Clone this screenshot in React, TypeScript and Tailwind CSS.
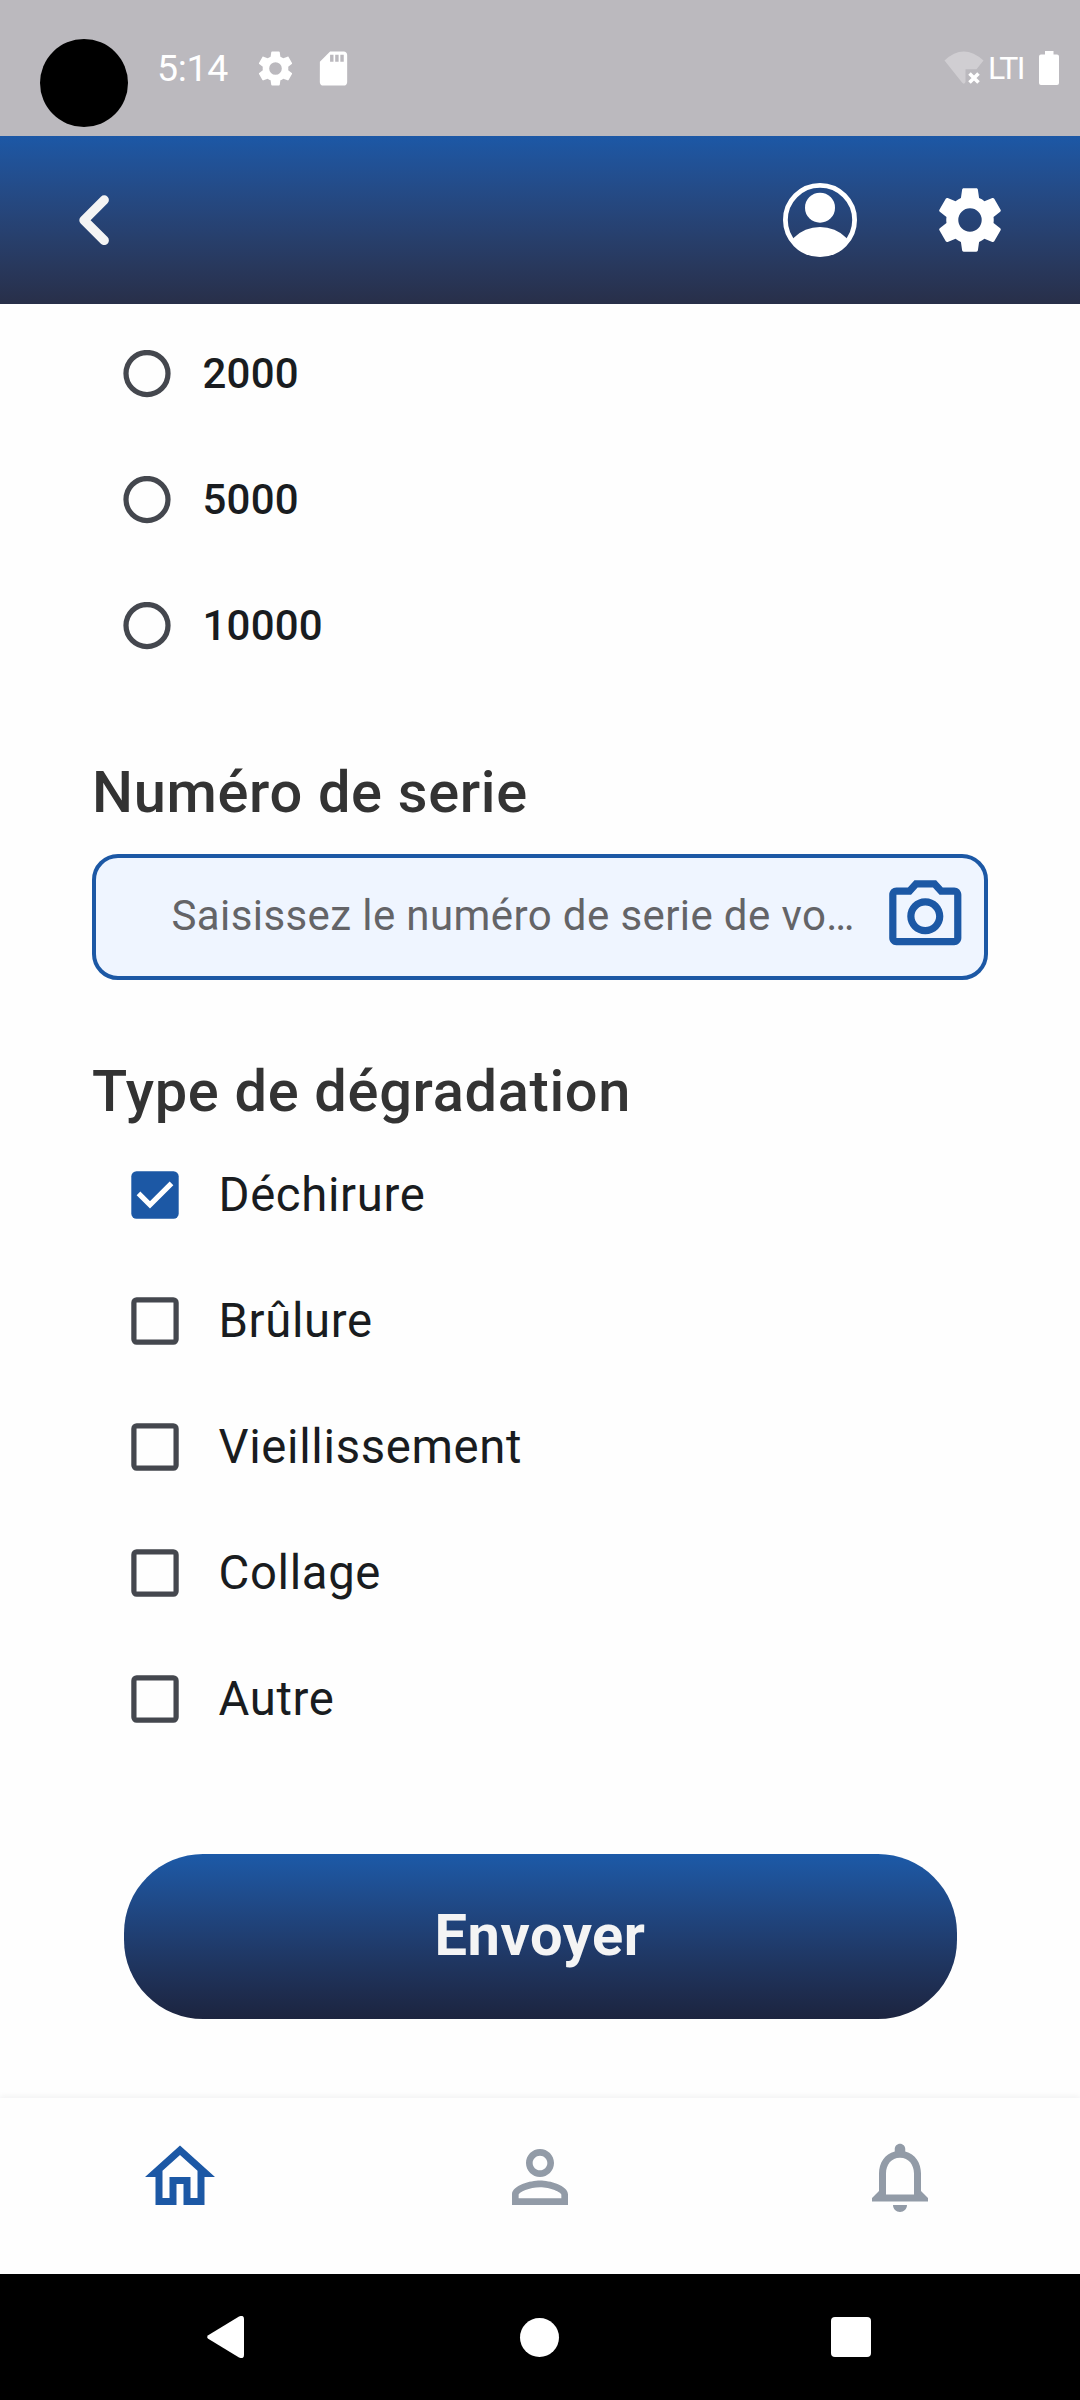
import React from "react";

const GEAR =
  "M19.43 12.98c.04-.32.07-.64.07-.98s-.03-.66-.07-.98l2.11-1.65c.19-.15.24-.42.12-.64l-2-3.46c-.12-.22-.39-.3-.61-.22l-2.49 1c-.52-.4-1.08-.73-1.69-.98l-.38-2.65C14.46 2.18 14.25 2 14 2h-4c-.25 0-.46.18-.49.42l-.38 2.65c-.61.25-1.17.59-1.69.98l-2.49-1c-.23-.09-.49 0-.61.22l-2 3.46c-.13.22-.07.49.12.64l2.11 1.65c-.04.32-.07.65-.07.98s.03.66.07.98l-2.11 1.65c-.19.15-.24.42-.12.64l2 3.46c.12.22.39.3.61.22l2.49-1c.52.4 1.08.73 1.69.98l.38 2.65c.03.24.24.42.49.42h4c.25 0 .46-.18.49-.42l.38-2.65c.61-.25 1.17-.59 1.69-.98l2.49 1c.23.09.49 0 .61-.22l2-3.46c.12-.22.07-.49-.12-.64l-2.11-1.65zM12 15.700a3.700 3.700 0 1 1 0-7.400 3.700 3.700 0 0 1 0 7.400z";
const SD_CARD =
  "M18 2h-8L4.02 8 4 20c0 1.1.9 2 2 2h12c1.1 0 2-.9 2-2V4c0-1.1-.9-2-2-2zm-6 6h-2V4h2v4zm3 0h-2V4h2v4zm3 0h-2V4h2v4z";
const CAMERA =
  "M14.12 4l1.83 2H20v12H4V6h4.05l1.83-2h4.24M15 2H9L7.17 4H4c-1.1 0-2 .9-2 2v12c0 1.1.9 2 2 2h16c1.1 0 2-.9 2-2V6c0-1.1-.9-2-2-2h-3.17L15 2zm-3 7c1.65 0 3 1.35 3 3s-1.35 3-3 3-3-1.35-3-3 1.35-3 3-3m0-2c-2.76 0-5 2.24-5 5s2.24 5 5 5 5-2.24 5-5-2.24-5-5-5z";
const HOME =
  "M12 5.69l5 4.5V18h-2v-6H9v6H7v-7.81l5-4.5M12 3L2 12h3v8h6v-6h2v6h6v-8h3L12 3z";
const PERSON =
  "M12 5.9c1.16 0 2.1.94 2.1 2.1s-.94 2.1-2.1 2.1S9.9 9.16 9.9 8s.94-2.1 2.1-2.1m0 9c2.97 0 6.1 1.46 6.1 2.1v1.1H5.9V17c0-.64 3.13-2.1 6.1-2.1M12 4C9.79 4 8 5.79 8 8s1.79 4 4 4 4-1.79 4-4-1.79-4-4-4zm0 9c-2.67 0-8 1.34-8 4v3h16v-3c0-2.66-5.33-4-8-4z";
const BELL =
  "M12 22c1.1 0 2-.9 2-2h-4c0 1.1.89 2 2 2zm6-6v-5c0-3.07-1.64-5.64-4.5-6.32V4c0-.83-.67-1.5-1.5-1.5s-1.5.67-1.5 1.5v.68C7.63 5.36 6 7.92 6 11v5l-2 2v1h16v-1l-2-2zm-2 1H8v-6c0-2.48 1.51-4.5 4-4.5s4 2.02 4 4.5v6z";

function Icon({ d, className }: { d: string; className: string }) {
  return (
    <svg viewBox="0 0 24 24" fill="currentColor" className={`shrink-0 ${className}`}>
      <path d={d} />
    </svg>
  );
}

function StatusBar() {
  return (
    <div className="flex h-[136px] shrink-0 items-start bg-[#bbb9be] pr-[21px] pl-10 text-white">
      <div className="mt-[39px] size-[88px] rounded-full bg-black" />
      <div className="flex h-[136px] flex-1 items-center">
        <span className="ml-[29px] w-[80px] pt-[2px] text-[37.500px] leading-none tracking-[-0.300px]">5:14</span>
        <Icon d={GEAR} className="ml-[18px] size-[41px]" />
        <Icon d={SD_CARD} className="ml-[17px] size-[41px]" />
        <svg viewBox="0 0 40 34" className="ml-auto h-[34px] w-[40px] shrink-0">
          <path
            d="M0.5 9.5Q19.5 -8.500 39.500 9.500L32.500 18.300H21.500V31Q20 34 18 31.500Z"
            fill="#d0ced2"
          />
          <path d="M25.500 22.500L34.500 31.500M34.500 22.500L25.500 31.500" stroke="#fff" strokeWidth="3.600" />
        </svg>
        <span className="ml-[4px] w-[37px] text-[32px] leading-none tracking-[-1.600px]">LTI</span>
        <svg viewBox="0 0 20 34" className="ml-[14px] h-[34px] w-[20px] shrink-0" fill="#fff">
          <path d="M6 0H14.500V3.500H18Q20 3.500 20 5.500V32Q20 34 18 34H2Q0 34 0 32V5.500Q0 3.500 2 3.500H6Z" />
        </svg>
      </div>
    </div>
  );
}

function Header() {
  return (
    <header className="flex h-[168px] shrink-0 items-center bg-linear-to-b from-[#1c58a6] to-[#282f49] pr-[72px] pl-[79px] text-white">
      <svg viewBox="0 0 30 50" className="h-[50px] w-[30px]" fill="none">
        <path
          d="M25.200 5L5 25.200L25.200 45.400"
          stroke="#f4f4f4"
          strokeWidth="9.400"
          strokeLinecap="round"
          strokeLinejoin="round"
        />
      </svg>
      <svg viewBox="0 0 74 74" className="ml-auto size-[74px]">
        <circle cx="37" cy="37" r="34.600" fill="none" stroke="#fff" strokeWidth="4.800" />
        <circle cx="37" cy="24.700" r="15" fill="#fff" />
        <path d="M10.500 55A37.400 37.400 0 0 1 63.500 55L66 58.800A36.400 36.400 0 0 1 8 58.800Z" fill="#fff" />
      </svg>
      <Icon d={GEAR} className="mb-[1px] ml-[75px] size-[76px]" />
    </header>
  );
}

function Radio({ label }: { label: string }) {
  return (
    <div className="flex h-[126px] items-center pl-[31px]">
      <svg viewBox="0 0 48 48" className="size-[48px]" fill="none">
        <circle cx="24" cy="23.500" r="21" stroke="#44474e" strokeWidth="5.250" />
      </svg>
      <span className="ml-[31.500px] text-[42px] leading-none font-medium tracking-[0.200px] text-[#191c20]">{label}</span>
    </div>
  );
}

function Checkbox({ label, checked }: { label: string; checked: boolean }) {
  return (
    <div className="flex h-[126px] items-center pl-[39px]">
      <svg viewBox="0 0 48 48" className="size-[48px]" fill="none">
        {checked ? (
          <>
            <rect x="0.300" y="0.300" width="47.400" height="47.400" rx="5.200" fill="#1c58a5" />
            <path d="M7.500 22.300L19 33.800L40.500 12.300" stroke="#fff" strokeWidth="5.200" />
          </>
        ) : (
          <rect x="2.900" y="2.900" width="42.200" height="42.200" rx="2.800" stroke="#44474e" strokeWidth="5.250" />
        )}
      </svg>
      <span className="ml-[39.500px] pt-[2px] text-[47.250px] leading-none tracking-[0.650px] text-[#191c20]">{label}</span>
    </div>
  );
}

function Heading({ children, className }: { children: React.ReactNode; className: string }) {
  return (
    <h2
      className={`flex items-center text-[57.750px] leading-none font-medium tracking-[0.680px] whitespace-nowrap text-[#333333] ${className}`}
    >
      {children}
    </h2>
  );
}

const AMOUNTS = ["2000", "5000", "10000"];
const DAMAGES = ["Déchirure", "Brûlure", "Vieillissement", "Collage", "Autre"];

export default function App() {
  return (
    <div className="flex h-[2400px] w-[1080px] flex-col overflow-hidden bg-[#fefefe] font-['Roboto',sans-serif]">
      <StatusBar />
      <Header />
      <main className="flex-1 px-[92px] pt-[6.500px]">
        {AMOUNTS.map((a) => (
          <Radio key={a} label={a} />
        ))}
        <Heading className="mt-[42px] h-[123px] pt-[2px]">Numéro de serie</Heading>
        <div className="flex h-[126px] items-center rounded-[26px] border-4 border-[#1c58a5] bg-[#eff5ff] pr-[15.500px] pl-[75.500px]">
          <span className="pb-[2px] text-[42px] leading-none tracking-[0.400px] whitespace-nowrap text-[#646467]">
            Saisissez le numéro de serie de vo…
          </span>
          <Icon d={CAMERA} className="ml-auto size-[86.600px] text-[#1c58a5]" />
        </div>
        <Heading className="mt-[71.500px] h-[81px]">Type de dégradation</Heading>
        {DAMAGES.map((d, i) => (
          <Checkbox key={d} label={d} checked={i === 0} />
        ))}
        <button className="mt-[91.500px] ml-[31.500px] flex h-[165.500px] w-[833px] items-center justify-center rounded-[79px] bg-linear-to-b from-[#1c5aa8] to-[#1c243f] text-[57.750px] leading-none font-bold tracking-[0.600px] text-[#f4f4f4]">
          Envoyer
        </button>
      </main>
      <nav className="grid h-[176px] shrink-0 grid-cols-3 justify-items-center bg-[#fefefe] pt-[37px] shadow-[0_-2px_6px_rgba(0,0,0,0.05)]">
        <Icon d={HOME} className="size-[84px] text-[#1c58a5]" />
        <Icon d={PERSON} className="size-[84px] text-[#929ba7]" />
        <Icon d={BELL} className="size-[84px] text-[#929ba7]" />
      </nav>
      <div className="flex h-[126px] shrink-0 items-center justify-between bg-black pr-[209px] pl-[207px]">
        <svg viewBox="0 0 37 42" className="h-[42px] w-[37px]" fill="#fff">
          <path d="M1.200 19.200Q-0.800 21 1.200 22.800L32 41.500Q37 43.500 37 39V3Q37 -1.500 32 0.500Z" />
        </svg>
        <div className="ml-[4px] size-[39px] rounded-full bg-white" />
        <div className="size-[40px] rounded-[4px] bg-white" />
      </div>
    </div>
  );
}
